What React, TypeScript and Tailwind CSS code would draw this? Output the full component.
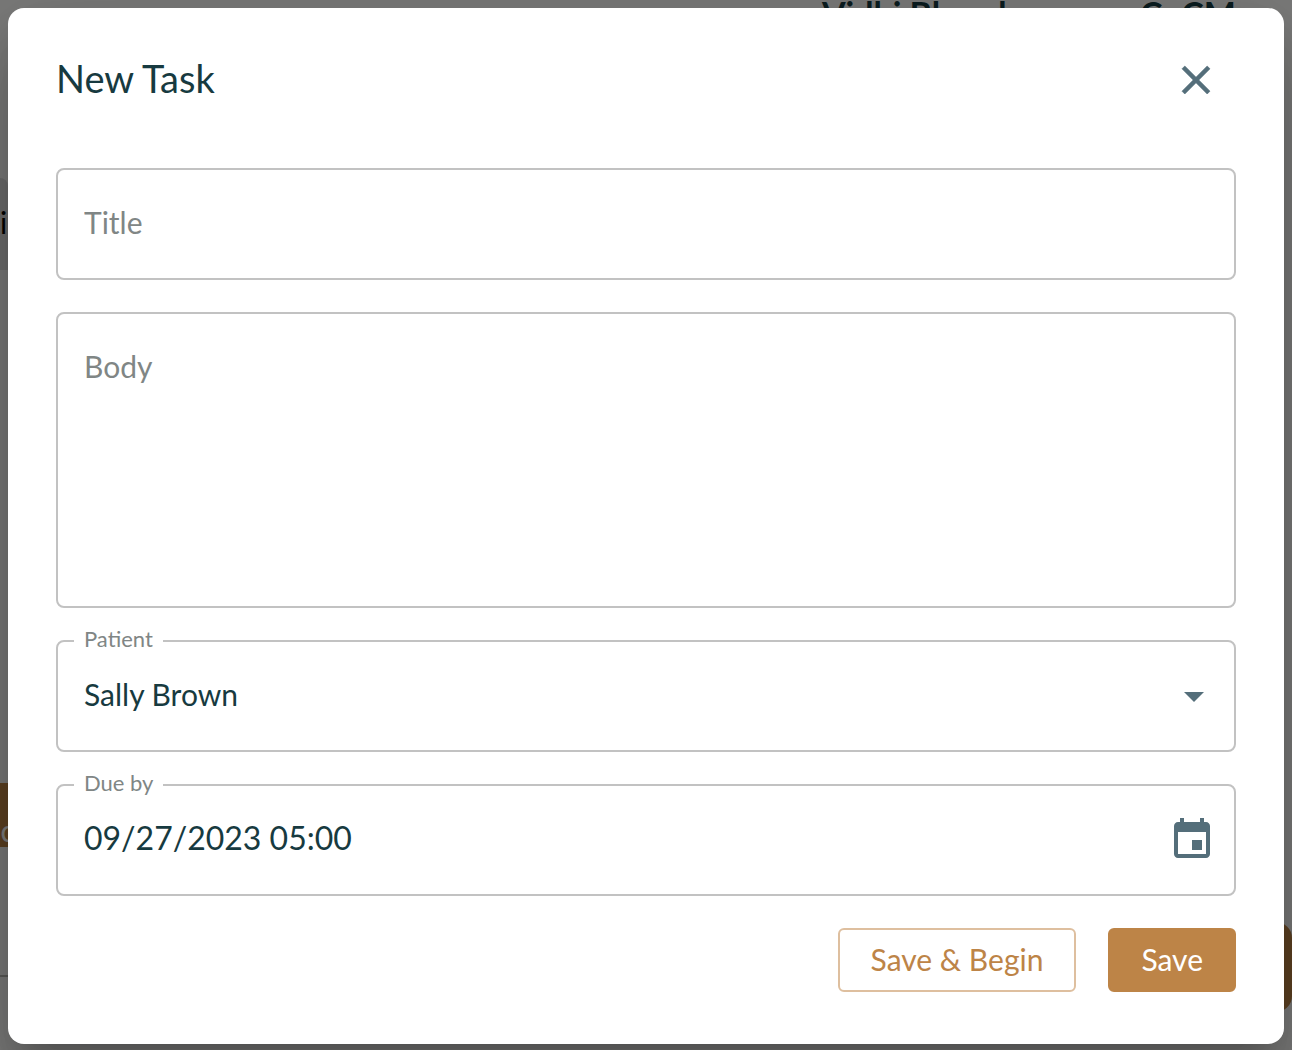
import { useState } from "react";

const inputClass =
  "w-full bg-transparent leading-[48px] text-[#173a40] placeholder:text-[#808685] placeholder:opacity-100 outline-none";

const fieldClass = "relative flex h-28 items-center rounded-lg border-2 border-[#c2c2c2]";

function CloseIcon() {
  return (
    <svg viewBox="0 0 24 24" className="size-12" fill="currentColor" stroke="currentColor" strokeWidth="0.3" aria-hidden="true">
      <path d="M19 6.41 17.59 5 12 10.59 6.41 5 5 6.41 10.59 12 5 17.59 6.41 19 12 13.41 17.59 19 19 17.59 13.41 12z" />
    </svg>
  );
}

function ArrowDropDownIcon() {
  return (
    <svg viewBox="0 0 24 24" className="size-12" fill="currentColor" aria-hidden="true">
      <path d="m7 10 5 5 5-5z" />
    </svg>
  );
}

function EventIcon() {
  return (
    <svg viewBox="0 0 24 24" className="size-12" fill="currentColor" aria-hidden="true">
      <path d="M17 12h-5v5h5v-5zM16 1v2H8V1H6v2H5c-1.11 0-1.99.9-1.99 2L3 19c0 1.1.89 2 2 2h14c1.1 0 2-.9 2-2V5c0-1.1-.9-2-2-2h-1V1h-2zm3 18H5V8h14v11z" />
    </svg>
  );
}

function FieldLabel({ htmlFor, children }: { htmlFor: string; children: string }) {
  return (
    <label
      htmlFor={htmlFor}
      className="absolute -top-[18px] left-4 bg-white px-[10px] text-[22px] leading-[30px] text-[#808685]"
    >
      {children}
    </label>
  );
}

// The dashboard that stays visible around the edges of the dialog.
function Dashboard() {
  return (
    <div className="absolute inset-0 flex justify-between overflow-hidden bg-[#f6f6f4]" aria-hidden="true">
      <div className="flex w-2 flex-col">
        <div className="mt-[178px] h-[92px] rounded-tr-lg bg-[#dadada] text-[30px] leading-[88px] text-black">
          i
        </div>
        <div className="mt-[513px] flex h-16 justify-center bg-[#bd8447] text-[30px] leading-[94px] text-white">
          ic
        </div>
        <div className="mt-32 h-[2px] bg-[#b5b5b0]" />
      </div>
      <div className="flex flex-col items-end">
        <div className="-mt-[6px] flex w-[470px] justify-between pr-14 text-[34px] leading-10 font-bold text-[#173a40]">
          <span>Vidhi Bhand</span>
          <span>CoCM</span>
        </div>
        <div className="mt-[888px] h-[90px] w-10 rounded-r-2xl bg-[#bd8447]" />
      </div>
    </div>
  );
}

export default function App() {
  const [title, setTitle] = useState("");
  const [body, setBody] = useState("");
  const [patient, setPatient] = useState("Sally Brown");
  const [dueBy, setDueBy] = useState("09/27/2023 05:00");

  return (
    <div className="relative min-h-screen overflow-hidden font-['Lato',sans-serif]">
      <Dashboard />

      <div className="relative min-h-screen bg-black/50 p-2">
        <form
          role="dialog"
          aria-labelledby="task-heading"
          onSubmit={(e) => e.preventDefault()}
          className="flex flex-col gap-8 rounded-2xl bg-white px-12 pt-12 pb-[52px] shadow-[0_22px_30px_-14px_rgba(0,0,0,0.2),0_48px_76px_6px_rgba(0,0,0,0.14),0_18px_92px_16px_rgba(0,0,0,0.12)]"
        >
          <div className="mb-8 flex h-12 items-center justify-between pr-4">
            <h1 id="task-heading" className="pb-1 text-[38px] leading-[48px] text-[#173a40]">
              New Task
            </h1>
            <button type="button" aria-label="Close" className="text-[#546e7a]">
              <CloseIcon />
            </button>
          </div>

          <div className={`${fieldClass} px-[26px] pb-1`}>
            <input
              type="text"
              aria-label="Title"
              placeholder="Title"
              value={title}
              onChange={(e) => setTitle(e.target.value)}
              className={`${inputClass} text-[30px]`}
            />
          </div>

          <div className="flex rounded-lg border-2 border-[#c2c2c2] px-[26px] py-7">
            <textarea
              rows={5}
              aria-label="Body"
              placeholder="Body"
              value={body}
              onChange={(e) => setBody(e.target.value)}
              className={`${inputClass} h-[236px] resize-none text-[30px]`}
            />
          </div>

          <div className={fieldClass}>
            <FieldLabel htmlFor="patient">Patient</FieldLabel>
            <select
              id="patient"
              value={patient}
              onChange={(e) => setPatient(e.target.value)}
              className={`${inputClass} appearance-none px-[26px] pb-1 text-[30px]`}
            >
              <option>Sally Brown</option>
            </select>
            <span className="pointer-events-none absolute inset-y-0 right-4 flex items-center text-[#546e7a]">
              <ArrowDropDownIcon />
            </span>
          </div>

          <div className={`${fieldClass} pr-[18px] pl-[26px]`}>
            <FieldLabel htmlFor="due-by">Due by</FieldLabel>
            <input
              id="due-by"
              type="text"
              value={dueBy}
              onChange={(e) => setDueBy(e.target.value)}
              className={`${inputClass} pb-1 text-[32px]`}
            />
            <button type="button" aria-label="Choose date" className="shrink-0 text-[#546e7a]">
              <EventIcon />
            </button>
          </div>

          <div className="flex justify-end gap-8">
            <button
              type="button"
              className="h-16 rounded-md border-2 border-[#debf9f] px-[31px] pb-[2px] text-[30px] leading-[48px] text-[#bd8447]"
            >
              Save &amp; Begin
            </button>
            <button
              type="submit"
              className="h-16 rounded-md border-2 border-[#bd8447] bg-[#bd8447] px-[31px] pb-[2px] text-[30px] leading-[48px] text-white"
            >
              Save
            </button>
          </div>
        </form>
      </div>
    </div>
  );
}
